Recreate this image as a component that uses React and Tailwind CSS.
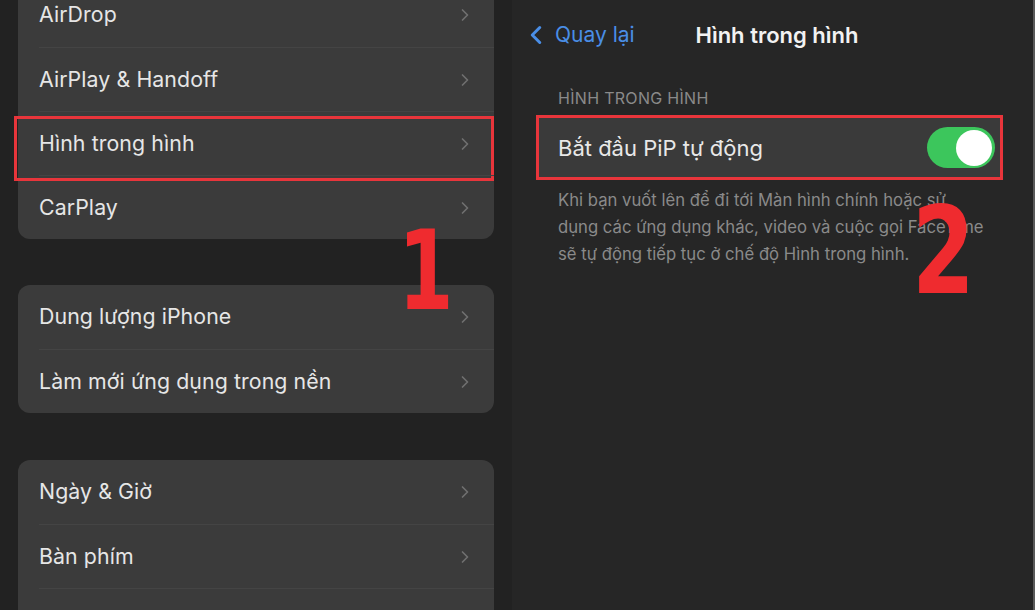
import { ChevronRight, ChevronLeft } from "lucide-react";

const groups = [
  { top: "-mt-[17px]", rows: ["AirDrop", "AirPlay & Handoff", "Hình trong hình", "CarPlay"], marked: 2 },
  { top: "mt-[46px]", rows: ["Dung lượng iPhone", "Làm mới ứng dụng trong nền"] },
  { top: "mt-[47px]", rows: ["Ngày & Giờ", "Bàn phím", "Phông chữ"] },
];

function Row({ label, first, marked }) {
  return (
    <div className="relative h-[64px]">
      <div
        className={
          "ml-[21px] h-full flex items-center justify-between pr-[19px] " +
          (first ? "" : "border-t border-[#444444]")
        }
      >
        <span className="text-[21.3px] text-[#e6e6e6] tracking-[0.1px]">{label}</span>
        <ChevronRight size={20} strokeWidth={2} className="text-[#707070]" />
      </div>
      {marked && (
        <div className="absolute left-[-4px] right-[0px] top-[5px] h-[65px] border-[3px] border-[#e8353b]" />
      )}
    </div>
  );
}

export default function App() {
  return (
    <div
      className="relative flex w-[1035px] h-[610px] overflow-hidden bg-[#232323]"
      style={{ fontFamily: "Inter, 'Liberation Sans', sans-serif" }}
    >
      {/* settings list */}
      <div className="w-[512px] shrink-0 pl-[18px] pr-[18px] bg-[#222222]">
        {groups.map((g, gi) => (
          <div key={gi} className={g.top + " rounded-[12px] bg-[#3b3b3b]"}>
            {g.rows.map((r, i) => (
              <Row key={r} label={r} first={i === 0} marked={g.marked === i} />
            ))}
          </div>
        ))}
      </div>

      {/* detail */}
      <div className="flex-1 bg-[#262626] border-r-2 border-[#5a5a5a]">
        <div className="grid grid-cols-[1fr_auto_1fr] items-center h-[70px] pl-[9px]">
          <div className="flex items-center text-[#4a8ee6]">
            <ChevronLeft size={30} strokeWidth={2.4} />
            <span className="ml-[4px] text-[21px]">Quay lại</span>
          </div>
          <span className="text-[22px] font-semibold text-[#f2f2f2]">Hình trong hình</span>
          <div />
        </div>

        <div className="pl-[46px] pt-[16px] text-[16px] text-[#8a8a8a] tracking-[0.3px]">
          HÌNH TRONG HÌNH
        </div>

        <div className="ml-[24px] mr-[30px] mt-[5px] h-[65px] flex items-center justify-between border-[3px] border-[#e8353b] bg-[#3a3a3a] pl-[19px] pr-[5px]">
          <span className="text-[22px] text-[#e8e8e8] translate-y-[1px]">Bắt đầu PiP tự động</span>
          <div className="w-[68px] h-[41px] rounded-full bg-[#3cc65c] flex items-center justify-end pr-[3px]">
            <div className="w-[36px] h-[36px] rounded-full bg-white" />
          </div>
        </div>

        <div className="pl-[46px] pt-[7px] text-[16.7px] leading-[27px] text-[#8a8a8a]">
          <div>Khi bạn vuốt lên để đi tới Màn hình chính hoặc sử</div>
          <div>dụng các ứng dụng khác, video và cuộc gọi FaceTime</div>
          <div>sẽ tự động tiếp tục ở chế độ Hình trong hình.</div>
        </div>
      </div>

      {/* red step numbers drawn over the screenshot */}
      <span
        className="absolute left-[398px] top-[215px] text-[111px] leading-none font-bold text-[#ef2b2f] origin-left scale-x-[0.72]"
        style={{ fontFamily: "'DejaVu Sans', sans-serif" }}
      >
        1
      </span>
      <span
        className="absolute left-[912px] top-[190px] text-[122px] leading-none font-bold text-[#ef2b2f] origin-left scale-x-[0.74]"
        style={{ fontFamily: "'DejaVu Sans', sans-serif" }}
      >
        2
      </span>
    </div>
  );
}
